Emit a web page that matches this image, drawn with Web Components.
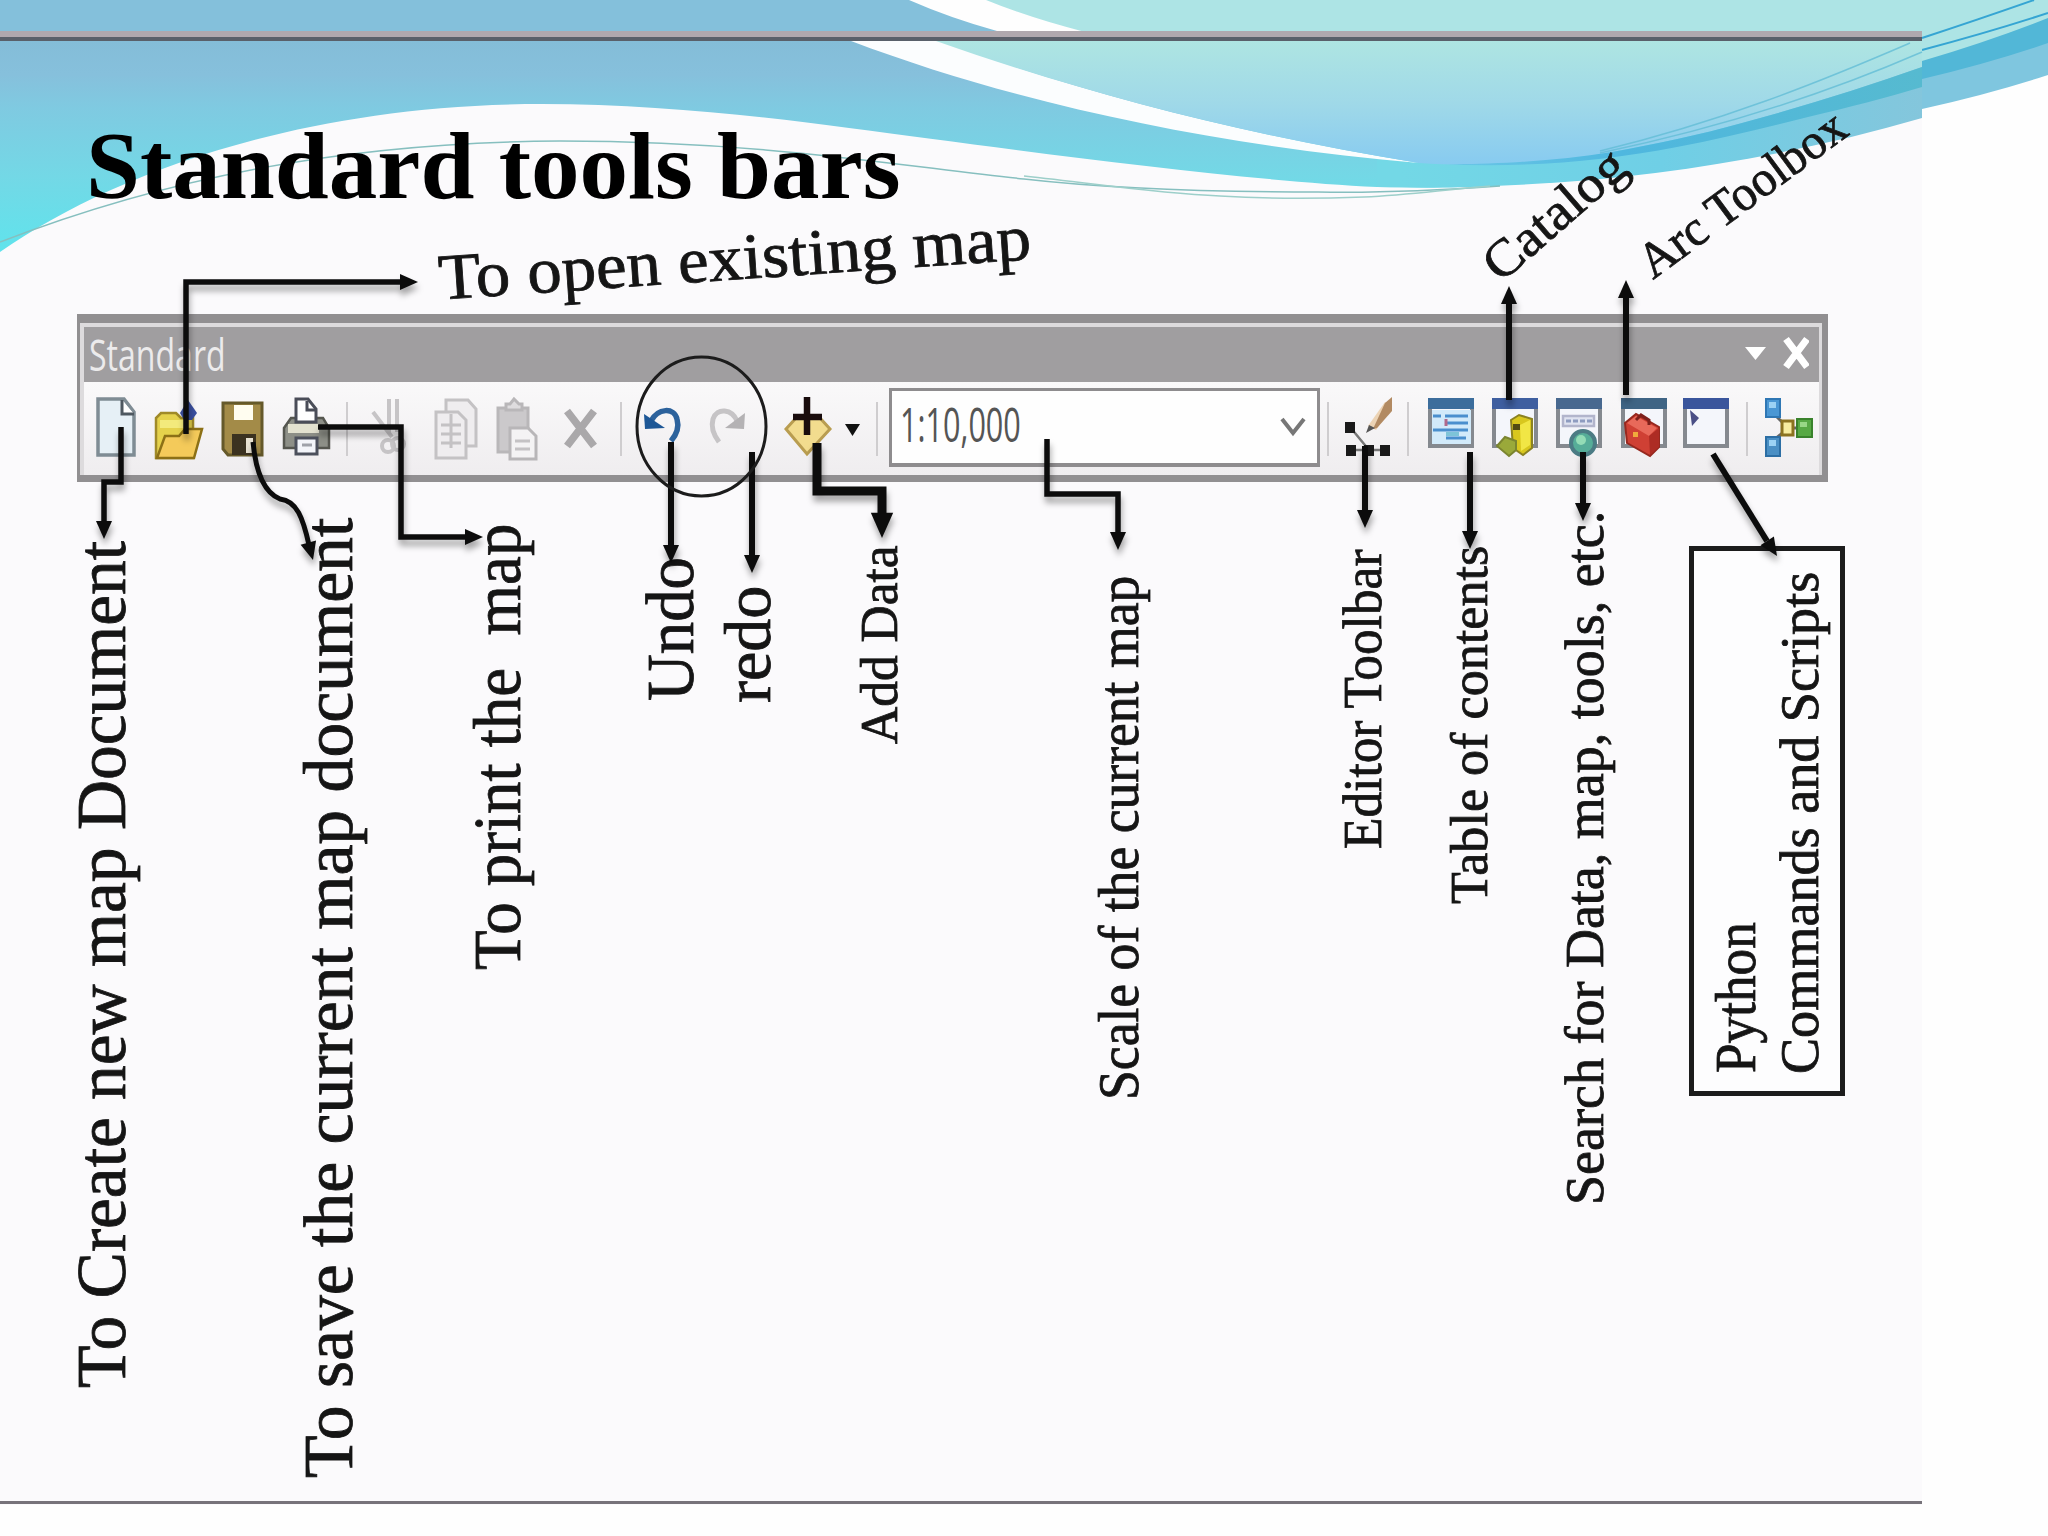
<!DOCTYPE html>
<html lang="en">
<head>
<meta charset="utf-8">
<title>Standard tools bars</title>
<style>
body{margin:0; background:#fefefe; font-family:"Liberation Serif", "Times New Roman", serif; color:#111;}
</style>
</head>
<body>
<slide-page>
  <slide-waves slot="back"></slide-waves>
  <fit-text class="title" size="96" length="815">Standard tools bars</fit-text>
  <tool-bar label="Standard">
    <tool-icon name="new"></tool-icon>
    <tool-icon name="open" style="width:62px"></tool-icon>
    <tool-icon name="save"></tool-icon>
    <tool-icon name="print"></tool-icon>
    <tool-sep style="width:18px"></tool-sep>
    <tool-icon name="cut"></tool-icon>
    <tool-icon name="copy" style="width:66px"></tool-icon>
    <tool-icon name="paste" style="width:63px"></tool-icon>
    <tool-icon name="remove"></tool-icon>
    <tool-sep></tool-sep>
    <tool-icon name="undo"></tool-icon>
    <tool-icon name="redo"></tool-icon>
    <tool-icon name="add" style="margin-left:19px"></tool-icon>
    <tool-icon name="drop" style="width:24px"></tool-icon>
    <tool-sep style="width:25px"></tool-sep>
    <scale-box>1:10,000</scale-box>
    <tool-sep style="width:15px"></tool-sep>
    <tool-icon name="editor"></tool-icon>
    <tool-sep style="width:18px"></tool-sep>
    <tool-icon name="toc" style="margin-left:2px"></tool-icon>
    <tool-icon name="catalog"></tool-icon>
    <tool-icon name="search"></tool-icon>
    <tool-icon name="toolbox"></tool-icon>
    <tool-icon name="python" style="width:63px"></tool-icon>
    <tool-sep style="width:18px"></tool-sep>
    <tool-icon name="model" style="width:62px"></tool-icon>
  </tool-bar>
  <div slot="notes">
    <note-box></note-box>
    <call-out x="440" y="300" size="65" length="594" angle="-3.9">To open existing map</call-out>
    <call-out x="1501" y="284" size="52" length="172" angle="-41">Catalog</call-out>
    <call-out x="1653" y="280" size="50" length="246" angle="-36.5">Arc Toolbox</call-out>
    <call-out x="126" y="1388" size="69" length="847">To Create new map Document</call-out>
    <call-out x="353" y="1478" size="69" length="960">To save the current map document</call-out>
    <call-out x="520" y="970" size="68" length="446">To print the  map</call-out>
    <call-out x="693" y="701" size="67" length="144">Undo</call-out>
    <call-out x="770" y="703" size="66" length="117">redo</call-out>
    <call-out x="898" y="744" size="52" length="199">Add Data</call-out>
    <call-out x="1138" y="1100" size="56" length="524">Scale of the current map</call-out>
    <call-out x="1381" y="849" size="55" length="300">Editor Toolbar</call-out>
    <call-out x="1487" y="904" size="53" length="358">Table of contents</call-out>
    <call-out x="1603" y="1205" size="54" length="694">Search for Data, map, tools, etc.</call-out>
    <call-out x="1755" y="1073" size="56" length="151">Python</call-out>
    <call-out x="1818" y="1074" size="55" length="502">Commands and Scripts</call-out>
    <arrow-layer></arrow-layer>
  </div>
</slide-page>

<script>
// page frame: waves behind, title and toolbar in flow, notes on top
class SlidePage extends HTMLElement {
    constructor() {
        super();
        this.attachShadow({mode: 'open'}).innerHTML = `
<style>
:host{display:block; position:relative; width:2048px; height:1536px; overflow:hidden;}
main{position:relative; display:flex; flex-direction:column; align-items:flex-start; padding:118px 0 0 77px; gap:100px;}
::slotted(.title){margin-left:9px; height:96px; font-weight:bold; color:#000;}
.notes{position:absolute; inset:0;}
</style>
<slot name="back"></slot>
<main><slot></slot></main>
<div class="notes"><slot name="notes"></slot></div>`;
    }
}
customElements.define('slide-page', SlidePage);

class SlideWaves extends HTMLElement {
    constructor() {
        super();
        this.attachShadow({mode: 'open'}).innerHTML = `
<style>
:host{display:block; position:absolute; inset:0;}
svg{display:block;}
</style>
<svg width="2048" height="1536" viewBox="0 0 2048 1536">
<defs>
<linearGradient id="blue" gradientUnits="userSpaceOnUse" x1="0" y1="41" x2="0" y2="250">
<stop offset="0" stop-color="#84bdd8"/><stop offset=".16" stop-color="#86c0dc"/><stop offset=".32" stop-color="#7fcae1"/><stop offset=".65" stop-color="#73d8e6"/><stop offset="1" stop-color="#60e3ec"/>
</linearGradient>
<linearGradient id="teal" gradientUnits="userSpaceOnUse" x1="0" y1="41" x2="0" y2="163">
<stop offset="0" stop-color="#aee5e2"/><stop offset=".5" stop-color="#a0d9e8"/><stop offset="1" stop-color="#88cbf0"/>
</linearGradient>
<linearGradient id="band" gradientUnits="userSpaceOnUse" x1="1420" y1="0" x2="1922" y2="0">
<stop offset="0" stop-color="#6fc9e8"/><stop offset=".4" stop-color="#4fb7df"/><stop offset="1" stop-color="#56bad0"/>
</linearGradient>
<linearGradient id="low" gradientUnits="userSpaceOnUse" x1="1400" y1="0" x2="1922" y2="0">
<stop offset="0" stop-color="#73d8e6"/><stop offset=".5" stop-color="#6fcfe6"/><stop offset="1" stop-color="#84c6dc"/>
</linearGradient>
</defs>
<!-- outer slide -->
<path fill="#84c0db" d="M0 0H909Q950 18 997 31V32H0Z"/>
<path fill="#ade4e5" d="M986 0H2048V60L1922 80V32H1085Q1030 18 986 0Z"/>
<path fill="#7fc6df" d="M1922 70L2048 30V75Q1990 94 1922 109Z"/>
<path fill="#52b7d7" d="M1922 61Q1990 41 2048 18V43Q1990 63 1922 79Z"/>
<path fill="none" stroke="#35a5d3" stroke-width="2" d="M1922 38Q1980 19 2034 0M1922 50Q1990 32 2048 13"/>
<!-- inner slide -->
<path fill="#fbfafc" d="M0 31H1922V1505H0Z"/>
<path fill="url(#blue)" d="M0 41H1500V186C1450 188 1420 188 1377 187C1230 180 1010 149 849 128C760 116 650 104 542 104C300 104 110 175 0 252Z"/>
<path fill="url(#low)" d="M1377 150L1922 60V118C1760 165 1580 191 1377 187Z"/>
<path fill="#fbfdfe" d="M851 41H940C1080 92 1240 134 1419 163C1220 146 1020 105 851 41Z"/>
<path fill="url(#teal)" d="M936 41H1922V67C1865 87 1805 106 1742 123C1700 135 1655 144 1612 152C1580 158 1550 162 1514 163C1480 165 1450 165 1419 163C1240 134 1080 92 936 41Z"/>
<path fill="url(#band)" d="M1440 164C1480 165 1550 162 1612 152C1655 144 1700 135 1742 123C1805 106 1865 87 1922 67V87C1885 98 1850 107 1808 117C1765 128 1720 139 1677 147C1600 162 1520 168 1440 164Z"/>
<path fill="none" stroke="#63bdd6" stroke-width="1.5" opacity=".8" d="M1910 43C1820 82 1720 122 1600 151M1922 52C1830 92 1720 128 1600 153"/>
<path fill="none" stroke="#86bfbf" stroke-width="1.5" d="M0 242C160 180 340 142 560 141C760 141 900 166 1024 179C1120 190 1220 192 1318 192C1370 193 1430 191 1500 186"/>
<path fill="none" stroke="#9dcfca" stroke-width="1.5" d="M1024 176C1100 184 1150 193 1220 196C1270 199 1310 199 1364 197C1410 195 1440 190 1490 186"/>
<!-- slide edges -->
<path fill="#afa8ae" d="M0 31H1922V37H0Z"/>
<path fill="#59606a" d="M0 37H1922V41H0Z"/>
<path fill="#77737a" d="M0 1501H1922V1504H0Z"/>
</svg>`;
    }
}
customElements.define('slide-waves', SlideWaves);

// text squeezed or stretched to a fixed length
class FitText extends HTMLElement {
    constructor() {
        super();
        this.attachShadow({mode: 'open'}).innerHTML = `
<style>
:host{display:block; line-height:1;}
span{display:inline-block; white-space:pre; transform-origin:0 0;}
</style>
<span><slot></slot></span>`;
    }
    connectedCallback() {
        const span = this.shadowRoot.querySelector('span');
        const length = this.getAttribute('length');
        this.style.fontSize = this.getAttribute('size') + 'px';
        this.style.width = length + 'px';
        span.style.transform = `scaleX(${length / span.offsetWidth})`;
    }
}
customElements.define('fit-text', FitText);

// x, y is the start of the baseline
class CallOut extends HTMLElement {
    constructor() {
        super();
        this.attachShadow({mode: 'open'}).innerHTML = `
<style>
:host{display:block; position:absolute; width:0; line-height:1; color:#151515;}
span{display:block; width:max-content; white-space:pre; transform-origin:0 0; -webkit-text-stroke:.8px #151515;}
</style>
<span><slot></slot></span>`;
    }
    connectedCallback() {
        const span = this.shadowRoot.querySelector('span');
        this.style.left = this.getAttribute('x') + 'px';
        this.style.top = this.getAttribute('y') + 'px';
        this.style.fontSize = this.getAttribute('size') + 'px';
        const angle = this.getAttribute('angle') || -90;
        const stretch = this.getAttribute('length') / span.offsetWidth;
        span.style.transform = `rotate(${angle}deg) scaleX(${stretch}) translateY(-.8375em)`;
    }
}
customElements.define('call-out', CallOut);

class ToolBar extends HTMLElement {
    constructor() {
        super();
        this.attachShadow({mode: 'open'}).innerHTML = `
<style>
:host{display:block; box-sizing:border-box; width:1751px; height:168px; background:#dddbdd;
    border:solid #918f91; border-width:9px 6px 7px 3px; padding:4px 3px 0 4px;}
header{display:flex; align-items:center; height:55px; background:#a09ea0; padding:0 10px 0 5px; box-sizing:border-box;}
header fit-text{font-family:"Open Sans", "Noto Sans", sans-serif; color:#ecebec; flex:1; margin-top:-1px;}
.tools{display:flex; height:93px; background:linear-gradient(#faf9fa, #efedef);}
</style>
<header>
<fit-text size="44" length="137">${this.getAttribute('label')}</fit-text>
<svg width="66" height="55" viewBox="0 0 66 55"><path fill="#fff" d="M2 20H23L12.500 33Z"/><path stroke="#fff" stroke-width="7" d="M43 12L64 40M64 12L43 40"/></svg>
</header>
<div class="tools"><slot></slot></div>`;
    }
}
customElements.define('tool-bar', ToolBar);

class ToolSep extends HTMLElement {
    constructor() {
        super();
        this.attachShadow({mode: 'open'}).innerHTML = `
<style>
:host{display:flex; justify-content:center; width:16px; flex:none;}
i{width:2px; height:54px; margin-top:20px; background:#cfcdcf;}
</style><i></i>`;
    }
}
customElements.define('tool-sep', ToolSep);

class ScaleBox extends HTMLElement {
    constructor() {
        super();
        this.attachShadow({mode: 'open'}).innerHTML = `
<style>
:host{display:flex; flex:none; box-sizing:border-box; width:431px; height:79px; margin-top:6px; background:#fefefe;
    border:3px solid #8e8c8e; border-bottom-width:4px; justify-content:space-between; align-items:center; padding:0 10px 0 8px;}
fit-text{font-family:"Open Sans", "Noto Sans", sans-serif; color:#555; margin-top:-7px;}
</style>
<fit-text size="48" length="121">${this.textContent}</fit-text>
<svg width="28" height="24" viewBox="0 0 28 24"><path fill="none" stroke="#777" stroke-width="4" d="M3 4L14 18L25 4"/></svg>`;
    }
}
customElements.define('scale-box', ScaleBox);

const frame = (x, head) => `<path fill="#f4f6fb" stroke="#85898f" stroke-width="4" d="M${x + 2} 18h42v46h-42z"/><path fill="${head}" d="M${x} 16h46v11h-46z"/>`;
const icons = {
    new: `<path fill="#e6f0f6" stroke="#7f8c94" stroke-width="3.500" d="M14 17H40L50 30V73H14Z"/><path fill="#fff" stroke="#4e5860" stroke-width="3" d="M38 18V32H50"/>`,
    open: `<path fill="#e5d24c" stroke="#a08a28" stroke-width="2.500" d="M8 76V36L13 31H28L33 36H45V76Z"/><path fill="#f3ea7c" d="M12 38H40V46H12Z"/><path fill="#f4ca5a" stroke="#8c7016" stroke-width="2.500" d="M9 76L17 54H31L37 47H54L46 76Z"/><path fill="#3a4fa0" d="M32 31L40 18L49 31L44 38H36Z"/>`,
    save: `<path fill="#a38b48" stroke="#65592a" stroke-width="3" d="M13 21H52V73H18L13 67Z"/><path fill="#fffdf0" d="M24 23H43V38H24Z"/><path fill="#3b3220" d="M22 52H46V73H22Z"/><path fill="#e8e2d2" d="M36 56H43V71H36Z"/>`,
    print: `<path fill="#8d8f87" stroke="#55564f" stroke-width="2.500" d="M10 46L17 36H49L55 46V66H10Z"/><path fill="#fff" stroke="#4a4d58" stroke-width="3" d="M22 40V17H34L42 27V40Z"/><path fill="none" stroke="#4a4d58" stroke-width="3" d="M33 19V28H41"/><path fill="#e3e2d0" d="M14 42H45V51H14Z"/><path fill="#f3f5fa" stroke="#4c505c" stroke-width="3" d="M22 56H43V72H22Z"/><path stroke="#9fa2aa" stroke-width="3" d="M28 63H38"/>`,
    cut: `<g fill="none" stroke="#c6c4c6" stroke-width="4"><path d="M33 17V52M41 17V50M17 30L36 55"/><circle cx="32" cy="64" r="6"/><circle cx="42" cy="62" r="6"/></g>`,
    copy: `<g fill="#efedef" stroke="#c4c2c4" stroke-width="3"><path d="M26 18H48L56 27V64H26Z"/><path d="M16 30H38L46 38V76H16Z"/><path d="M21 43H41M21 52H41M21 61H41M31 32V66"/></g>`,
    paste: `<path fill="#cbc9cb" stroke="#b9b7b9" stroke-width="3" d="M12 26H42V70H12Z"/><path fill="#dedcde" stroke="#b9b7b9" stroke-width="3" d="M20 28V22H24L28 17L33 22H36V28Z"/><path fill="#f4f3f4" stroke="#b8b6b8" stroke-width="3" d="M24 46H42L50 54V77H24Z"/><path stroke="#c4c2c4" stroke-width="3" d="M29 59H44M29 67H44"/>`,
    remove: `<path stroke="#aaa8aa" stroke-width="7.500" d="M18 29L45 64M45 29L18 64"/>`,
    undo: `<path fill="none" stroke="#2c629c" stroke-width="5.500" d="M22 39C29 26 45 25 48 37C50 44 48 52 42 59"/><path fill="#1d5796" d="M15 32L36 46L16 47Z"/>`,
    redo: `<path fill="none" stroke="#c6c4c6" stroke-width="5" d="M44 39C39 27 24 25 20 37C18 44 20 52 26 60"/><path fill="#b4b2b4" d="M52 31L32 46L51 47Z"/>`,
    add: `<path fill="#f2dc8e" stroke="#b99d50" stroke-width="3" d="M10 47L20 36H44L54 47L31 72Z"/><path stroke="#190c0c" stroke-width="6.500" d="M31 15V53M17 35H46"/>`,
    drop: `<path fill="#111" d="M5 42H20L12.500 54Z"/>`,
    editor: `<path stroke="#777" stroke-width="2.500" d="M15 45L34 68M16 68H50"/><path fill="#1a1a1a" d="M10 40h10v11h-10zM11 63h10v11h-10zM29 63h10v11h-10zM45 63h10v11h-10z"/><path fill="#ecd3b4" d="M33 44L50 20L57 26L41 48Z"/><path fill="#b28a62" d="M50 21L57 15V29L42 46L38 47Z"/><path fill="#555" d="M31 51L34 43L40 46Z"/>`,
    toc: frame(9, '#3c6d9c') + `<path fill="#d2eafa" d="M13 28H52V62H13Z"/><path stroke="#4a8fce" stroke-width="3" d="M14 34H22M26 34H49M14 48H49M27 41H49M27 56H47"/><path stroke="#7ec4d8" stroke-width="4" d="M27 52H40"/><path stroke="#b06a8c" stroke-width="3" d="M27 37V44"/>`,
    catalog: frame(9, '#3f5fa0') + `<path fill="#d8c71e" stroke="#8b8222" stroke-width="2" d="M28 38L36 33L49 37V66L40 73L30 66Z"/><path fill="#f1e645" d="M37 43L47 38V63L38 69Z"/><path fill="#9aa93a" stroke="#7b8530" stroke-width="2" d="M14 64L22 55L33 59V68L26 74Z"/><path fill="#524b14" d="M30 42H37V48H30Z"/>`,
    search: frame(9, '#48688f') + `<path fill="#dfe3f0" stroke="#b2b5cc" stroke-width="2.500" d="M16 34H47V44H16Z"/><path stroke="#8e9cc0" stroke-width="3" stroke-dasharray="5 2" d="M19 39H45"/><circle cx="36" cy="61" r="12" fill="#56ad98" stroke="#4b7b84" stroke-width="4"/><circle cx="34" cy="58" r="5" fill="#93dcb6"/>`,
    toolbox: frame(10, '#3f6484') + `<path fill="#cf4034" stroke="#96281f" stroke-width="2" d="M14 41L25 32L48 45V65L39 74L16 61Z"/><path fill="#e8695a" d="M16 41L25 34L46 46L38 54Z"/><path fill="#ad2c24" d="M38 54L48 46V65L39 73Z"/><path fill="none" stroke="#7d201b" stroke-width="3" d="M25 38L30 33L38 38V43"/><path fill="#f0a93c" d="M22 50H27V55H22Z"/>`,
    python: frame(8, '#3a559c') + `<path fill="#4a4f86" d="M15 28L24 36L17 44Z"/>`,
    model: `<path stroke="#666" stroke-width="3" d="M18 32L30 44M18 58L30 48M34 46H44"/><path fill="#4a97d4" stroke="#2f77b4" stroke-width="2" d="M10 17H24V35H10Z"/><path fill="#4a8fc4" stroke="#2c6ea4" stroke-width="2" d="M10 55H24V74H10Z"/><path fill="#9cd2f4" d="M13 20H20V26H13ZM13 58H20V64H13Z"/><path fill="#f7eda0" stroke="#8b7320" stroke-width="3" d="M26 39H37V53H26Z"/><path fill="#57a944" stroke="#39822c" stroke-width="2" d="M41 37H56V55H41Z"/><path fill="#98d886" d="M44 40H51V45H44Z"/>`
};

class ToolIcon extends HTMLElement {
    constructor() {
        super();
        this.attachShadow({mode: 'open'}).innerHTML = `
<style>
:host{display:block; flex:none; width:64px; height:93px;}
svg{display:block; overflow:visible;}
</style>
<svg width="64" height="93" viewBox="0 0 64 93" fill="none">${icons[this.getAttribute('name')]}</svg>`;
    }
}
customElements.define('tool-icon', ToolIcon);

// frame around the Python note
class NoteBox extends HTMLElement {
    constructor() {
        super();
        this.attachShadow({mode: 'open'}).innerHTML = `
<style>
:host{display:block; position:absolute; left:1689px; top:546px; width:156px; height:550px; box-sizing:border-box;
    border:5px solid #1c1c1c; background:#fdfdfe;}
</style>`;
    }
}
customElements.define('note-box', NoteBox);

class ArrowLayer extends HTMLElement {
    constructor() {
        super();
        // line, width, tip x, tip y, direction in degrees, head scale
        const arrows = [
            ['M186 434V282H402', 5.5, 418, 282, 0],
            ['M121 427V482H104V524', 5.5, 104, 539, 90],
            ['M253 442C256 474 265 493 280 499C297 501 303 518 309 545', 5, 313, 560, 75],
            ['M318 427H401V537H468', 5.5, 483, 537, 0],
            ['M671 442V548', 6, 671, 563, 90],
            ['M752 452V558', 6, 752, 573, 90],
            ['M817 443V491H882V518', 9, 882, 538, 90, 1.4],
            ['M1047 439V494H1118V535', 5.5, 1118, 550, 90],
            ['M1365 446V512', 6, 1365, 528, 90],
            ['M1470 452V534', 6, 1470, 549, 90],
            ['M1509 400V302', 6, 1509, 286, -90],
            ['M1583 452V506', 6, 1583, 521, 90],
            ['M1626 395V296', 6, 1626, 280, -90],
            ['M1713 454L1767 541', 6, 1777, 556, 57]
        ];
        const drawn = arrows.map(([d, w, x, y, turn, big = 1]) =>
            `<path fill="none" stroke="#0c0c0c" stroke-width="${w}" d="${d}"/>
<path fill="#0c0c0c" transform="translate(${x} ${y}) rotate(${turn}) scale(${big})" d="M0 0L-18 -8V8Z"/>`).join('');
        this.attachShadow({mode: 'open'}).innerHTML = `
<style>
:host{display:block; position:absolute; inset:0;}
svg{display:block;}
g{filter:drop-shadow(1px 6px 3px rgba(0,0,0,.35));}
</style>
<svg width="2048" height="1536" viewBox="0 0 2048 1536">
<g>${drawn}</g>
<ellipse cx="701.500" cy="426.500" rx="64.500" ry="69.500" fill="none" stroke="#1c1c1c" stroke-width="3"/>
</svg>`;
    }
}
customElements.define('arrow-layer', ArrowLayer);
</script>
</body>
</html>
